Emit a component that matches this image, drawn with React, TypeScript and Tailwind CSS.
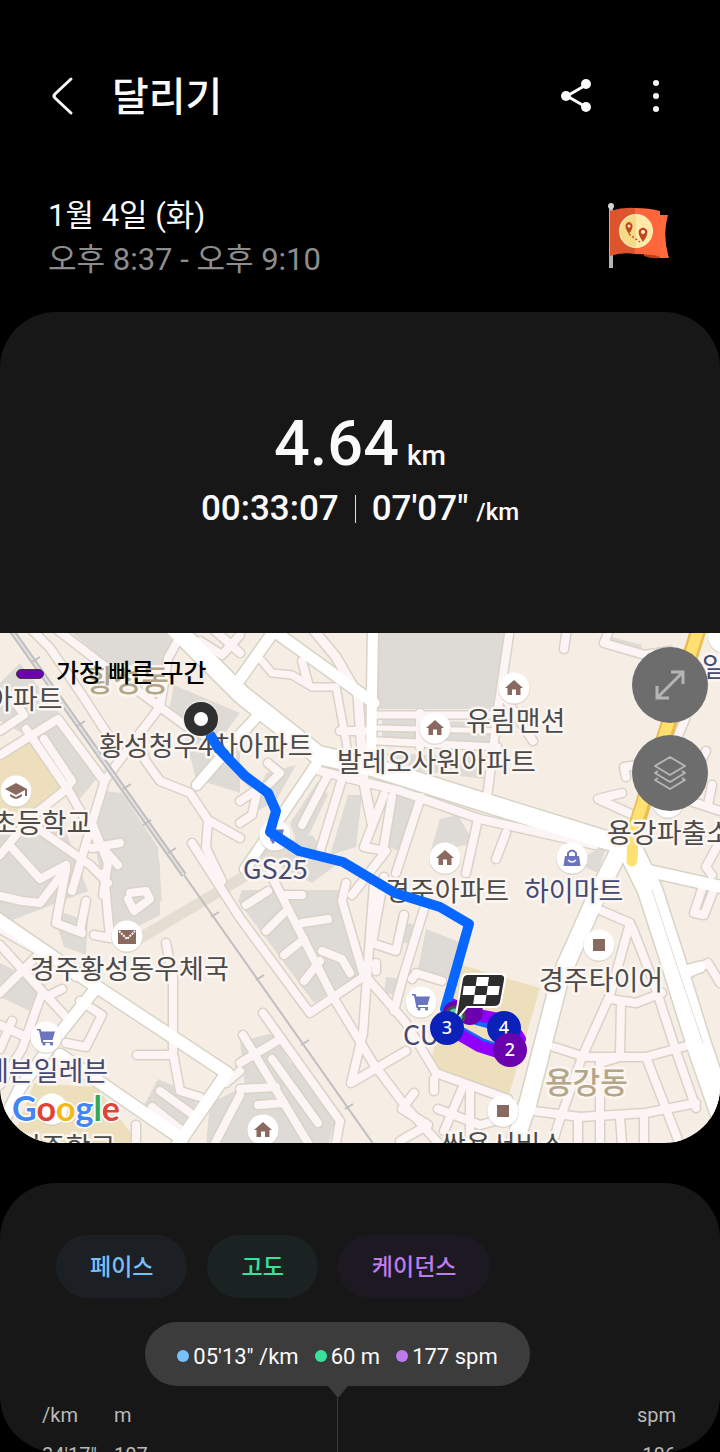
import React from 'react';

type Road = { d: string; w?: number };

const minorRoads: Road[] = [
  // north west
  { d: 'M55 -5 L103 32 L160 74' },
  { d: 'M185 -5 L168 25 L160 74 L140 100 L105 147 L92 190 L72 258' },
  { d: 'M30 -5 L50 15 L82 62 L110 105' },
  { d: 'M140 110 L145 127 L160 148 L190 160 L208 187 L240 205' },
  { d: 'M208 187 L206 215 L222 248' },
  { d: 'M0 122 L58 86 L104 148' },
  { d: 'M0 98 L24 82 L10 62' },
  { d: 'M26 96 L70 160 L100 212 L118 232' },
  { d: 'M44 106 L72 148 L64 158' },
  { d: 'M0 222 L30 185 L64 158' },
  { d: 'M30 190 L90 232 L108 250' },
  { d: 'M12 215 L40 246 L66 232' },
  { d: 'M92 190 L108 230 L103 262' },
  { d: 'M92 215 L120 210' },
  { d: 'M160 74 L190 96 L222 110' },
  { d: 'M212 -5 L240 20' },
  { d: 'M240 2 L222 22 L200 8' },
  { d: 'M262 28 L272 40 L292 42 L312 54 L336 54 L346 108 L350 134', w: 7 },
  { d: 'M312 -5 L336 24 L358 62 L364 150 L372 190', w: 9 },
  { d: 'M302 28 L308 50' },
  { d: 'M340 98 L364 98' },
  { d: 'M268 130 L280 140 L262 158 L244 142' },
  { d: 'M240 168 L258 156 L252 182 L240 190' },
  // centre blocks
  { d: 'M378 82 L500 82', w: 7 },
  { d: 'M378 95 L500 98', w: 5 },
  { d: 'M378 108 L498 114', w: 7 },
  { d: 'M510 -5 L498 76 L487 165' },
  { d: 'M420 80 L420 114' },
  { d: 'M505 65 L533 108' },
  { d: 'M320 138 L400 158 L480 186 L595 212', w: 8 },
  { d: 'M328 142 L302 192' },
  { d: 'M342 146 L320 218' },
  { d: 'M384 162 L364 214 L386 218 L352 262' },
  { d: 'M392 164 L384 212' },
  { d: 'M421 164 L396 240' },
  { d: 'M478 186 L466 240' },
  { d: 'M506 200 L496 226' },
  { d: 'M567 -5 L564 16' },
  { d: 'M610 -5 L604 10 L645 22 L670 18' },
  { d: 'M622 160 L598 166 L642 186' },
  { d: 'M638 132 L624 134 L626 144' },
  { d: 'M712 152 L708 172 M690 168 L720 178' },
  { d: 'M706 118 L700 130 M685 86 L676 108' },
  { d: 'M720 208 L706 234 L712 242' },
  // south west
  { d: 'M0 263 L22 268 L40 270 L66 236' },
  { d: 'M66 236 L56 290 L82 300' },
  { d: 'M104 240 L110 305 L94 302' },
  { d: 'M86 268 L80 298' },
  { d: 'M130 260 L146 258 L150 266 L134 278 L128 266' },
  { d: 'M0 296 L60 330 L76 344' },
  { d: 'M0 312 L42 358 L68 386' },
  { d: 'M40 320 L0 360' },
  { d: 'M50 362 L62 356' },
  { d: 'M42 360 L22 416 L0 452' },
  { d: 'M0 392 L26 404 M12 388 L0 416' },
  { d: 'M80 368 L102 382 L86 414 L66 410' },
  { d: 'M166 310 L173 345 L173 420 L180 458 L200 464' },
  { d: 'M137 422 L173 422' },
  { d: 'M152 474 L180 496 M160 458 L196 484' },
  { d: 'M240 438 L226 450' },
  { d: 'M215 510 L240 462' },
  { d: 'M136 492 L136 512' },
  { d: 'M192 210 L240 285 L310 380 L366 342' },
  { d: 'M270 240 L333 364 L373 430 L406 474 L440 512' },
  { d: 'M246 272 L268 258 M282 262 L302 262 M266 298 L284 280 M302 290 L328 286' },
  { d: 'M284 322 L304 306 M304 348 L320 328' },
  { d: 'M322 318 L342 326 L350 340' },
  { d: 'M346 250 L342 268 L363 340 L406 390 L436 440 L480 456 L508 466' },
  { d: 'M374 250 L368 330 L363 400 L351 450 L406 418' },
  { d: 'M384 244 L372 310 L396 318 L404 282' },
  { d: 'M424 276 L403 344 L394 378' },
  { d: 'M412 346 L416 340 L442 348' },
  { d: 'M376 330 L376 338' },
  { d: 'M263 380 L340 488 L336 510' },
  { d: 'M272 426 L318 490' },
  { d: 'M243 402 L308 510' },
  { d: 'M240 430 L277 408' },
  { d: 'M240 456 L276 454 M258 472 L284 470' },
  { d: 'M434 446 L434 458' },
  { d: 'M462 456 L444 498 M470 458 L470 506' },
  { d: 'M438 476 L480 492 L510 484' },
  { d: 'M414 460 L402 476 L428 492 L400 508' },
  // south east
  { d: 'M602 278 L630 290 L610 362 L582 424 L558 492 L552 512' },
  { d: 'M632 294 L654 350 L676 418 L696 475' },
  { d: 'M610 366 L636 370 L662 360' },
  { d: 'M554 414 L585 424 L646 424 L690 412' },
  { d: 'M534 478 L580 484 L646 480 L696 470' },
  { d: 'M621 370 L620 424 L600 430' },
  { d: 'M600 426 L600 512 M646 424 L680 512' },
  { d: 'M578 484 L578 512 M620 484 L622 512 M644 482 L644 512' },
  { d: 'M690 340 L708 330 L720 350' },
  { d: 'M704 250 L694 280 L704 282 L714 256' },
];

const majorRoads: Road[] = [
  { d: 'M168 -12 L242 62 L318 122 L372 134 L480 168 L622 212', w: 18 },
  { d: 'M240 46 L274 -2 L374 70', w: 11 },
  { d: 'M373 -5 L371 130', w: 10 },
  { d: 'M262 78 L240 102 L197 152', w: 10 },
  { d: 'M317 130 L278 188 L245 236', w: 10 },
  { d: 'M622 212 L597 262 L560 345 L528 470 L512 518', w: 17 },
  { d: 'M628 212 L650 257 L672 325 L700 415 L726 490', w: 24 },
  { d: 'M640 236 L722 254', w: 12 },
  { d: 'M686 338 L700 334', w: 11 },
  { d: 'M-5 284 L97 354 L227 440', w: 12 },
  { d: 'M97 354 L60 400 L20 455 L-5 505', w: 11 },
  { d: 'M60 422 L182 506', w: 12 },
  { d: 'M227 440 L176 514', w: 12 },
];

const buildings = [
  '378,0 506,0 494,76 378,76',
  '66,-5 160,-5 178,14 160,36 108,30',
  '174,52 240,80 222,104 168,82',
  '0,50 20,30 84,112 100,142 76,170 40,110 0,88',
  '104,158 122,160 158,214 162,268 104,262 92,196',
  '184,100 240,118 240,160 196,146',
  '0,200 60,182 88,258 0,292',
  '266,140 296,132 276,168 250,182',
  '290,190 318,148 328,162 300,220',
  '348,162 362,162 356,214 330,222',
  '250,218 312,202 336,232 312,250',
  '382,86 500,90 498,110 382,106',
  '382,120 480,124 484,146 420,138',
  '440,186 458,182 474,210 430,220',
  '388,162 424,166 406,222 386,212',
  '242,257 350,257 342,280 364,338 314,370 238,268',
  '426,296 462,310 450,346 418,336',
  '404,290 424,292 414,312 398,308',
  '386,344 402,346 396,362 384,360',
  '52,276 88,288 86,322 64,314',
  '106,244 160,230 160,282 114,306',
  '0,330 46,352 30,378 0,364',
  '158,446 200,464 184,492 142,476',
  '210,470 300,426 336,486 328,512 206,512',
  '240,408 274,400 312,470 250,500',
  '612,4 642,12 640,20 610,16',
  '590,220 606,214 598,240 580,232',
];

const sand = [
  '28,106 64,158 40,184 0,176 0,120',
  '455,330 540,355 509,462 440,440 432,424',
  '34,450 96,454 140,512 10,512',
];

const railTicks = [
  [36, 27], [81, 91], [127, 154], [147, 190], [172, 218],
  [215, 282], [260, 345], [305, 410], [349, 474],
];

const places = [
  { x: -12, y: 76, text: '아파트' },
  { x: 99, y: 123, text: '황성청우4차아파트' },
  { x: 337, y: 139, text: '발레오사원아파트' },
  { x: 466, y: 98, text: '유림맨션' },
  { x: -8, y: 200, text: '초등학교' },
  { x: 607, y: 210, text: '용강파출소' },
  { x: 385, y: 268, text: '경주아파트' },
  { x: 30, y: 346, text: '경주황성동우체국' },
  { x: 539, y: 357, text: '경주타이어' },
  { x: 16, y: 524, text: '경주학교' },
  { x: 441, y: 522, text: '쌍용서비스' },
];

const shops = [
  { x: 243, y: 246, text: 'GS25' },
  { x: 524, y: 268, text: '하이마트' },
  { x: 403, y: 412, text: 'CU' },
  { x: -16, y: 448, text: '세븐일레븐' },
  { x: 702, y: 44, text: '일' },
];

const laps = [
  { x: 447, y: 395, label: '3', color: '#0b22ba' },
  { x: 504, y: 395, label: '4', color: '#0b22ba' },
  { x: 510, y: 417, label: '2', color: '#6a02ad' },
];

const chips = [
  { label: '페이스', style: 'bg-[#1c2024] text-[#78c0fb]' },
  { label: '고도', style: 'bg-[#1a2321] text-[#37e39c]' },
  { label: '케이던스', style: 'bg-[#1d1922] text-[#bf7bed]' },
];

const readings = [
  { value: `05'13" /km`, dot: 'bg-[#78c0fb]' },
  { value: '60 m', dot: 'bg-[#37e39c]' },
  { value: '177 spm', dot: 'bg-[#bf7bed]' },
];

const Pin = ({ x, y, children }: { x: number; y: number; children?: React.ReactNode }) => (
  <g transform={`translate(${x} ${y})`}>
    <circle cy="1" r="16" fill="#cfc8c2" opacity="0.6" />
    <circle r="15.5" fill="#fff" />
    {children}
  </g>
);

const House = () => <path d="M0 -8 L-9 0 H-6.500 V7 H-2 V1.500 H2 V7 H6.500 V0 H9 Z" fill="#8a6a60" />;

const Cart = () => (
  <g fill="#6a74c0">
    <path d="M-9 -8 H-5.500 L-4.500 -5.500 H9 L6.500 3 H-3 L-2.500 5 H7 V6 H-4.500 L-7 -6.500 H-9 Z" />
    <circle cx="-2" cy="7" r="1.600" />
    <circle cx="5.500" cy="7" r="1.600" />
  </g>
);

const StreetMap = () => (
  <svg
    viewBox="0 0 720 510"
    preserveAspectRatio="xMidYMid slice"
    className="block w-full h-auto font-['Noto_Sans_CJK_KR',sans-serif]"
    role="img"
    aria-label="달리기 경로 지도"
  >
    <rect width="720" height="510" fill="#f6eee5" />
    {buildings.map((points) => (
      <polygon key={points} points={points} fill="#dedbd6" />
    ))}
    {sand.map((points) => (
      <polygon key={points} points={points} fill="#eedfbc" />
    ))}
    <path d="M125 314 L240 246 L290 212" stroke="#e4ddd1" strokeWidth="11" fill="none" />

    {/* Roads: outlines first so that junctions stay open */}
    <g fill="none" strokeLinecap="round" strokeLinejoin="round">
      {minorRoads.map((r) => (
        <path key={r.d} d={r.d} stroke="#d8d3c6" strokeWidth={(r.w ?? 8) + 3} />
      ))}
      {majorRoads.map((r) => (
        <path key={r.d} d={r.d} stroke="#d8d3c6" strokeWidth={(r.w ?? 12) + 3} />
      ))}
      {minorRoads.map((r) => (
        <path key={r.d} d={r.d} stroke="#fdf5f5" strokeWidth={r.w ?? 8} />
      ))}
      {majorRoads.map((r) => (
        <path key={r.d} d={r.d} stroke="#ffffff" strokeWidth={r.w ?? 12} />
      ))}
      <path d="M652 257 L676 330 L703 410" stroke="#e3dcd3" strokeWidth="1" />
      <path d="M699 -5 L633 203" stroke="#e9bd4f" strokeWidth="16" strokeLinecap="butt" />
      <path d="M699 -5 L633 200 L632 228" stroke="#ffe070" strokeWidth="11" />
    </g>

    {/* Railway */}
    <g stroke="#bfbec0" fill="none">
      <path d="M12 -2 L184 242" strokeWidth="6" />
      <path d="M12 -2 L184 242" strokeWidth="2" stroke="#e4e2e0" />
      <path d="M184 242 L374 512" strokeWidth="2" />
      {railTicks.map(([x, y]) => (
        <path key={y} d={`M${x - 4} ${y + 2} L${x + 4} ${y - 3}`} strokeWidth="2" />
      ))}
    </g>

    <Pin x={16} y={158}>
      <path d="M-11 -2 L0 -8 L11 -2 V5 H9 V-1 L0 4 Z M-6 3 L0 6 L6 3 V5 Q0 11 -6 5 Z" fill="#8a6a60" />
    </Pin>
    <Pin x={514} y={55}><House /></Pin>
    <Pin x={435} y={95}><House /></Pin>
    <Pin x={445} y={225}><House /></Pin>
    <Pin x={263} y={497}><House /></Pin>
    <Pin x={275} y={202}><Cart /></Pin>
    <Pin x={421} y={369}><Cart /></Pin>
    <Pin x={46} y={404}><Cart /></Pin>
    <Pin x={52} y={476}>
      <circle r="3" fill="#8a6a60" />
    </Pin>
    <Pin x={127} y={303}>
      <path d="M-9 -6 H9 V8 H-9 Z" fill="#8a6a60" />
      <path d="M-8 -5 L0 3 L8 -5" stroke="#fff" strokeWidth="2" strokeDasharray="2 1" fill="none" />
    </Pin>
    <Pin x={572} y={225}>
      <path d="M-7 -2 H7 L8.500 8 H-8.500 Z" fill="#6a74c0" />
      <path d="M-4 -2 V-5 Q0 -10 4 -5 V-2" stroke="#6a74c0" strokeWidth="2" fill="none" />
      <path d="M-4 2 Q0 6 4 2" stroke="#fff" strokeWidth="1.500" fill="none" />
    </Pin>
    <Pin x={599} y={312}>
      <rect x="-6" y="-6" width="12" height="12" fill="#8a6a60" />
    </Pin>
    <Pin x={503} y={478}>
      <rect x="-6" y="-6" width="12" height="12" fill="#8a6a60" />
    </Pin>
    <Pin x={668} y={169} />
    <Pin x={724} y={4} />

    {/* Labels */}
    <g fontSize="27" stroke="#fbf6f2" strokeWidth="5" strokeLinejoin="round" paintOrder="stroke">
      {places.map((p) => (
        <text key={p.text} x={p.x} y={p.y} fill="#4c4a49">{p.text}</text>
      ))}
      {shops.map((p) => (
        <text key={p.text} x={p.x} y={p.y} fill="#444a72">{p.text}</text>
      ))}
      <text x="86" y="58" fill="#b4a688" fontWeight="500" fontSize="30">황성동</text>
      <text x="545" y="460" fill="#b4a688" fontWeight="500" fontSize="30">용강동</text>
    </g>

    {/* Route */}
    <g fill="none" strokeLinejoin="round" strokeLinecap="round">
      <path d="M451 374 L478 386 L504 393 L516 408 L508 421 L480 411 L455 397" stroke="#1466ff" strokeWidth="13" />
      <path d="M451 371 L478 382 L508 388 L520 406 L510 423 L479 413 L455 399" stroke="#9000ff" strokeWidth="12" />
      <path d="M211 103 L218 115 L245 143 L268 160 L276 178 L270 199 L299 218 L343 229 L395 260 L440 274 L469 291 L445 376" stroke="#0766ff" strokeWidth="10" />
    </g>
    <circle cx="470" cy="379" r="13" fill="#6a02ad" />
    <circle cx="455" cy="380" r="12" fill="#6a02ad" />
    <circle cx="455" cy="383" r="9" fill="#4fd0a0" stroke="#4b4b4b" strokeWidth="3" />
    <circle cx="201" cy="85" r="18" fill="#e9e6e3" />
    <circle cx="201" cy="86" r="12" fill="#fff" stroke="#303030" strokeWidth="10" />

    {/* Finish flag */}
    <path
      d="M466 341 H500 Q506 341 505 347 L501 369 Q500 374 494 374 H467 L455 388 L462 346 Q463 341 468 341 Z"
      fill="#2d2d2d"
      stroke="#fff"
      strokeWidth="2"
    />
    <g fill="#fff" transform="translate(463 344) skewX(-8)">
      <path d="M14 0 H26 V9 H14 Z M2 9 H14 V18 H2 Z M26 9 H38 V18 H26 Z M14 18 H26 V27 H14 Z" />
    </g>

    {laps.map((lap) => (
      <g key={lap.label}>
        <circle cx={lap.x} cy={lap.y} r="17" fill={lap.color} />
        <text
          x={lap.x}
          y={lap.y + 6}
          textAnchor="middle"
          fontSize="18"
          fill="#fff"
          className="font-['Noto_Sans',sans-serif] font-medium"
        >
          {lap.label}
        </text>
      </g>
    ))}

    <text
      x="12"
      y="488"
      fontSize="34"
      stroke="#fff"
      strokeWidth="3"
      paintOrder="stroke"
      className="font-['Lato',sans-serif] font-bold"
    >
      <tspan fill="#4285f4">G</tspan>
      <tspan fill="#e04338">o</tspan>
      <tspan fill="#f4b912">o</tspan>
      <tspan fill="#4285f4">g</tspan>
      <tspan fill="#34a853">l</tspan>
      <tspan fill="#e04338">e</tspan>
    </text>
  </svg>
);

const RouteFlag = () => (
  <svg viewBox="0 0 64 68" className="w-16 h-[68px]" aria-hidden="true">
    <path d="M50 13 H62 Q56 33 63 56 H50 Z" fill="#ff6a3f" />
    <path d="M38 51 H54 V56 Q46 57 38 54 Z" fill="#b93c1c" />
    <path d="M50 13 H54 V56 L50 54 Z" fill="#d9512b" />
    <rect x="3" y="4" width="4" height="62" fill="#b5b5b5" />
    <circle cx="5" cy="4" r="3" fill="#d2d2d2" />
    <path d="M4 9 Q17 5 29 6 V52 Q16 50 4 54 Z" fill="#de542d" />
    <path d="M29 6 Q44 6 54 9 V54 Q42 52 29 52 Z" fill="#ff663a" />
    <circle cx="30" cy="29" r="17" fill="#fff0c2" />
    <path d="M30 13 A16 16 0 0 0 30 45 Z" fill="#f5db87" />
    <path d="M30 13 A16 16 0 0 1 30 45 Z" fill="#ffeaa8" />
    <path d="M23 32 Q18 25 20 22 Q23 18 26 22 Q28 25 23 32 Z M37 40 Q31 31 33 28 Q37 23 41 28 Q43 32 37 40 Z" fill="#c2461f" />
    <circle cx="23" cy="24" r="1.500" fill="#fff0c2" />
    <circle cx="37" cy="30" r="2" fill="#fff0c2" />
    <path d="M23 32 L27 35 L34 40" stroke="#c2461f" strokeWidth="1.500" strokeDasharray="2 2" fill="none" />
  </svg>
);

const App: React.FC = () => {
  return (
    <div className="min-h-screen bg-black text-[#fafafa] font-['Roboto','Noto_Sans_CJK_KR',sans-serif]">
      {/* Header */}
      <header className="flex items-center pt-14 px-10">
        <button type="button" aria-label="뒤로" className="w-11 h-20 flex items-center justify-center">
          <svg viewBox="0 0 24 40" className="w-6 h-10" fill="none" stroke="currentColor" strokeWidth="3">
            <path d="M21 3 L5 18 Q3 20 5 22 L21 37" strokeLinecap="round" strokeLinejoin="round" />
          </svg>
        </button>
        <h1 className="flex-1 pl-7 pt-1 text-[40px] leading-[60px] font-medium">달리기</h1>
        <button type="button" aria-label="공유" className="w-12 h-20 flex items-center justify-center">
          <svg viewBox="0 0 32 36" className="w-8 h-9" fill="currentColor">
            <path d="M26 7 L7 18 L26 29" fill="none" stroke="currentColor" strokeWidth="3" />
            <circle cx="26" cy="6" r="5" />
            <circle cx="6" cy="18" r="5" />
            <circle cx="26" cy="29" r="5" />
          </svg>
        </button>
        <button type="button" aria-label="더보기" className="ml-8 w-12 h-20 flex items-center justify-center">
          <svg viewBox="0 0 8 36" className="w-2 h-9" fill="currentColor">
            <circle cx="4" cy="5" r="3" />
            <circle cx="4" cy="18" r="3" />
            <circle cx="4" cy="31" r="3" />
          </svg>
        </button>
      </header>

      {/* Date */}
      <section className="flex items-start justify-between pt-[58px] pb-[30px] pl-12 pr-[50px]">
        <div className="text-[31px] leading-[44px]">
          <p>1월 4일 (화)</p>
          <p className="text-[#8d8d8d]">오후 8:37 - 오후 9:10</p>
        </div>
        <div className="pt-2">
          <RouteFlag />
        </div>
      </section>

      {/* Summary and map */}
      <section className="bg-[#171717] rounded-[56px] overflow-hidden">
        <div className="pt-[98px] pb-[93px] flex flex-col items-center font-medium">
          <p className="flex items-baseline gap-2">
            <span className="text-[63px] leading-[68px]">4.64</span>
            <span className="text-[28px]">km</span>
          </p>
          <div className="flex items-center gap-4 text-[35px] leading-[62px]">
            <span>00:33:07</span>
            <span className="w-px h-7 bg-[#e0e0e0]" />
            <span className="flex items-baseline gap-2">
              07'07"
              <span className="text-2xl leading-8">/km</span>
            </span>
          </div>
        </div>

        <div className="relative">
          <StreetMap />
          <div className="absolute top-[25px] left-4 flex items-center gap-3 text-black">
            <span className="w-7 h-[10px] rounded-full bg-[#6a02ad] border border-[#3b3b3b]" />
            <span className="text-[25px] leading-8 font-medium">가장 빠른 구간</span>
          </div>
          <div className="absolute top-[14px] right-3 flex flex-col gap-3">
            <button
              type="button"
              aria-label="지도 확대"
              className="size-[76px] rounded-full bg-[#6d6d6d] text-[#b5b5b5] flex items-center justify-center"
            >
              <svg viewBox="0 0 32 32" className="w-8 h-8" fill="none" stroke="currentColor" strokeWidth="3">
                <path d="M3 29 L29 3 M17 3 H29 V15 M3 17 V29 H15" />
              </svg>
            </button>
            <button
              type="button"
              aria-label="지도 유형"
              className="size-[76px] rounded-full bg-[#6d6d6d] text-[#b5b5b5] flex items-center justify-center"
            >
              <svg viewBox="0 0 36 36" className="w-9 h-9" fill="none" stroke="currentColor" strokeWidth="2" strokeLinejoin="round">
                <path d="M18 2 L33 11 L18 20 L3 11 Z" />
                <path d="M6 16 L3 18 L18 27 L33 18 L30 16" />
                <path d="M6 23 L3 25 L18 34 L33 25 L30 23" />
              </svg>
            </button>
          </div>
        </div>
      </section>

      {/* Chart */}
      <section className="mt-10 bg-[#171717] rounded-[56px] overflow-hidden">
        <div className="flex gap-5 px-14 pt-[52px]">
          {chips.map((chip) => (
            <button
              key={chip.label}
              type="button"
              className={`h-[63px] px-[34px] pt-1 rounded-full text-[23px] font-medium ${chip.style}`}
            >
              {chip.label}
            </button>
          ))}
        </div>

        <div className="relative h-[130px] mt-6">
          <div className="absolute top-0 left-[145px] w-[385px]">
            <div className="h-16 rounded-full bg-[#3c3c3c] flex items-center justify-center gap-4 pt-1 text-[22px]">
              {readings.map((reading) => (
                <span key={reading.value} className="flex items-center gap-1">
                  <i className={`w-3 h-3 rounded-full ${reading.dot}`} />
                  {reading.value}
                </span>
              ))}
            </div>
            <svg viewBox="0 0 20 12" className="block mx-auto w-5 h-3" fill="#3c3c3c">
              <path d="M0 0 H20 L10 12 Z" />
            </svg>
            <div className="mx-auto w-px h-[54px] bg-[#3c3c3c]" />
          </div>
          <div className="pt-[78px] pl-[42px] pr-11 text-xl leading-[30px] text-[#b9b9b9]">
            <div className="flex">
              <span className="w-[72px]">/km</span>
              <span className="flex-1">m</span>
              <span>spm</span>
            </div>
            <div className="flex pt-[10px]">
              <span className="w-[72px]">24'17"</span>
              <span className="flex-1">107</span>
              <span>186</span>
            </div>
          </div>
        </div>
      </section>
    </div>
  );
};

export default App;
